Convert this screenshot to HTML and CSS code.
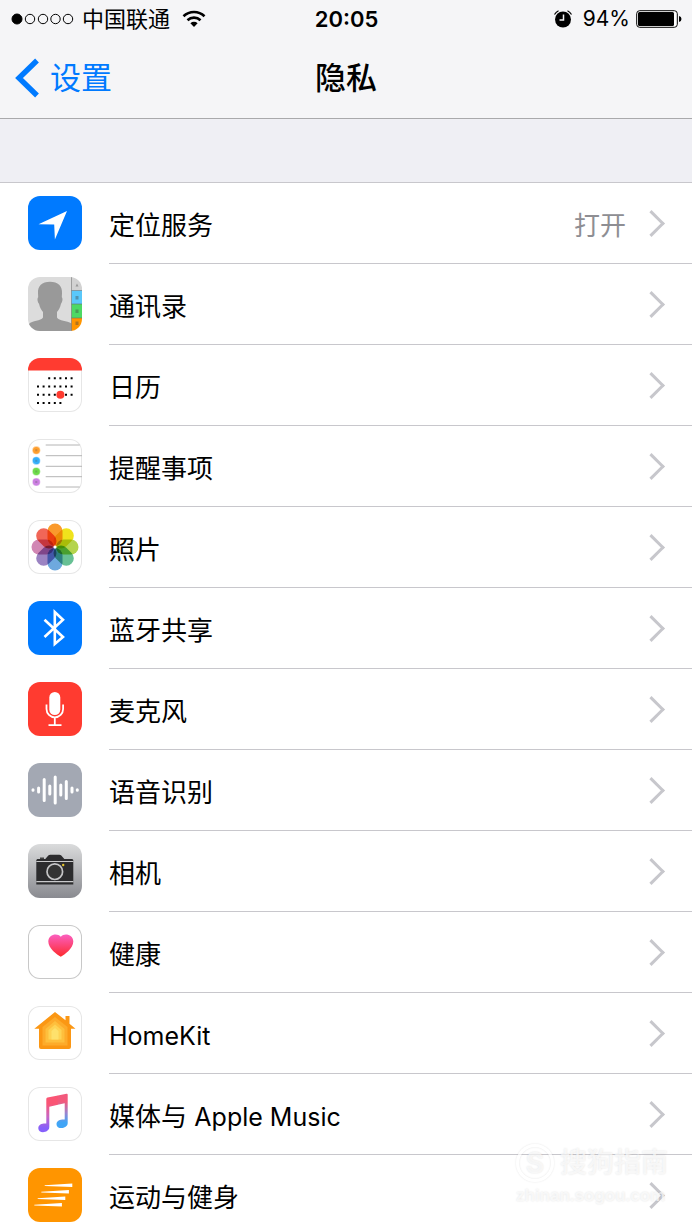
FILE: index.html
```html
<!DOCTYPE html>
<html lang="zh-CN">
  <head>
    <meta charset="UTF-8" />
    <meta name="viewport" content="width=device-width, initial-scale=1.0" />
    <title>隐私</title>
    <link rel="stylesheet" href="styles.css">
  </head>
  <body>
    <div class="screen">
      <header class="header">
        <div class="status-bar">
          <div class="status-left">
            <svg class="signal" width="63" height="12" viewBox="0 0 63 12" fill="none" stroke="#000">
              <circle cx="6" cy="6" r="5" fill="#000"></circle>
              <circle cx="19" cy="6" r="4.7"></circle>
              <circle cx="32" cy="6" r="4.7"></circle>
              <circle cx="44.500" cy="6" r="4.7"></circle>
              <circle cx="57" cy="6" r="4.7"></circle>
            </svg>
            <span class="carrier">中国联通</span>
            <svg width="24" height="18" viewBox="0 0 24 18" fill="none" stroke="#000" stroke-width="2.600">
              <path d="M1.500 6.300a15 15 0 0 1 21 0"></path>
              <path d="M5.500 10.300a9.300 9.300 0 0 1 13 0"></path>
              <path d="M12 17l-3.600-3.700a5.200 5.200 0 0 1 7.200 0z" fill="#000" stroke="none"></path>
            </svg>
          </div>
          <div class="status-time">20:05</div>
          <div class="status-right">
            <svg width="20" height="20" viewBox="0 0 20 20" fill="none">
              <circle cx="10" cy="10.500" r="8" fill="#000"></circle>
              <path d="M1.500 5.500a9 9 0 0 1 4-3.700M18.500 5.500a9 9 0 0 0-4-3.700" stroke="#000" stroke-width="1.200"></path>
              <path d="M10.500 5.500v5.500h-4" stroke="#f5f5f7" stroke-width="1.500"></path>
            </svg>
            <span class="percent">94%</span>
            <svg width="46" height="18" viewBox="0 0 46 18">
              <rect x=".7" y=".7" width="40.600" height="16.600" rx="3" fill="#fff" stroke="#000" stroke-width="1"></rect>
              <rect x="2" y="2" width="36" height="14" rx="1.500"></rect>
              <path d="M43 6q2.500 .5 2.500 3t-2.500 3z"></path>
            </svg>
          </div>
        </div>
        <nav class="nav-bar">
          <a class="back" href="#">
            <svg width="26" height="40" viewBox="0 0 26 40" fill="none" stroke="currentColor" stroke-width="5.400">
              <path d="M23 2.500L5 20l18 17.500"></path>
            </svg>
            设置
          </a>
          <h1 class="title">隐私</h1>
        </nav>
      </header>

      <ul class="list">
        <li>
          <a class="row" href="#">
            <svg class="icon blue" viewBox="0 0 54 54">
              <path d="M39 15L10.500 28.200l15.700.4.700 15z" fill="#fff"></path>
            </svg>
            <span class="cell"><span class="label">定位服务</span><span class="value">打开</span></span>
          </a>
        </li>
        <li>
          <a class="row" href="#">
            <svg class="icon" viewBox="0 0 54 54">
              <path fill="#dcdcdc" d="M0 0h43.500v54H0z"></path>
              <path fill="#999" d="M22 4.700c-8 0-12.500 4.300-12 11.500l.2 4c-1.200 1-.8 4.500.8 6.600 1 4 2 6 4 8.200v5.500C13 44 4 43.500 1 47v7h42.500v-7.500C39 43.500 31 44 29 40.500V35c2-2.200 3-4.200 4-8.200 1.600-2.100 2-5.600.8-6.600l.2-4c.5-7.200-4-11.500-12-11.500z"></path>
              <path fill="#d2d2d2" d="M43.500 0H54v13.500H43.500z"></path>
              <path fill="#5ac8fa" d="M43.500 13.500H54V27H43.500z"></path>
              <path fill="#4cd964" d="M43.500 27H54v14H43.500z"></path>
              <path fill="#ff9500" d="M43.500 41H54v13H43.500z"></path>
              <path d="M43.500 0v54M43.500 13.500H54M43.500 27H54M43.500 41H54" stroke="#666" stroke-opacity=".55"></path>
              <path d="M47.500 9.500l1.500-3 1.500 3zM47.500 19h3v3.500h-3zM47.500 32.500h3V36h-3zM47.500 44.500h3V48h-3z" fill="#444" fill-opacity=".4"></path>
            </svg>
            <span class="cell"><span class="label">通讯录</span></span>
          </a>
        </li>
        <li>
          <a class="row" href="#">
            <svg class="icon outlined" viewBox="0 0 54 54">
              <path fill="#ff3b30" d="M0 0h54v12.500H0z"></path>
              <path d="M20.200 20.300h25M9 28.500h36M9 36.800h36M9 45h25" stroke="#000" stroke-width="2" stroke-dasharray="2 3.600"></path>
              <circle cx="32.400" cy="36.800" r="4" fill="#ff3b30"></circle>
            </svg>
            <span class="cell"><span class="label">日历</span></span>
          </a>
        </li>
        <li>
          <a class="row" href="#">
            <svg class="icon outlined" viewBox="0 0 54 54">
              <path d="M17.700 6h34M17.700 16.700H54M17.700 27.300H54M17.700 37.700H54M17.700 48h34" stroke="#b4b4b4"></path>
              <g stroke-width="1.200" stroke="#fff" stroke-opacity=".45">
                <circle cx="8.300" cy="11.300" r="4" fill="#ff9f2e"></circle>
                <circle cx="8.300" cy="21.700" r="4" fill="#35aefa"></circle>
                <circle cx="8.300" cy="32.500" r="4" fill="#6edc4b"></circle>
                <circle cx="8.300" cy="43" r="4" fill="#cc80e2"></circle>
              </g>
              <path d="M7.300 11.300h2M7.300 21.700h2M7.300 32.500h2M7.300 43h2" stroke="#555" stroke-opacity=".3" stroke-width="2"></path>
            </svg>
            <span class="cell"><span class="label">提醒事项</span></span>
          </a>
        </li>
        <li>
          <a class="row" href="#">
            <svg class="icon outlined petals" viewBox="0 0 54 54">
              <rect x="19.500" y="3.500" width="15" height="22.500" rx="7.500" fill="#fa9a2c"></rect>
              <rect x="19.500" y="3.500" width="15" height="22.500" rx="7.500" fill="#f0e31c" transform="rotate(45 27 27)"></rect>
              <rect x="19.500" y="3.500" width="15" height="22.500" rx="7.500" fill="#b4d44e" transform="rotate(90 27 27)"></rect>
              <rect x="19.500" y="3.500" width="15" height="22.500" rx="7.500" fill="#67c094" transform="rotate(135 27 27)"></rect>
              <rect x="19.500" y="3.500" width="15" height="22.500" rx="7.500" fill="#6ea9de" transform="rotate(180 27 27)"></rect>
              <rect x="19.500" y="3.500" width="15" height="22.500" rx="7.500" fill="#9b83c2" transform="rotate(225 27 27)"></rect>
              <rect x="19.500" y="3.500" width="15" height="22.500" rx="7.500" fill="#d187b4" transform="rotate(270 27 27)"></rect>
              <rect x="19.500" y="3.500" width="15" height="22.500" rx="7.500" fill="#f16657" transform="rotate(315 27 27)"></rect>
              <circle class="center" cx="27" cy="27" r="1.500" fill="#fff"></circle>
            </svg>
            <span class="cell"><span class="label">照片</span></span>
          </a>
        </li>
        <li>
          <a class="row" href="#">
            <svg class="icon blue" viewBox="0 0 54 54">
              <path d="M16.500 18.700L35 36l-8.200 7v-32L35 18.700 16.500 36" fill="none" stroke="#fff" stroke-width="2.600"></path>
            </svg>
            <span class="cell"><span class="label">蓝牙共享</span></span>
          </a>
        </li>
        <li>
          <a class="row" href="#">
            <svg class="icon red" viewBox="0 0 54 54">
              <rect x="21.300" y="10" width="11" height="23" rx="5.500" fill="#fff"></rect>
              <path d="M18.500 22.500V27a8.300 8.300 0 0 0 16.600 0v-4.500M26.800 35.500V43M20.500 43.200h13" fill="none" stroke="#fff" stroke-width="1.800"></path>
            </svg>
            <span class="cell"><span class="label">麦克风</span></span>
          </a>
        </li>
        <li>
          <a class="row" href="#">
            <svg class="icon gray" viewBox="0 0 54 54">
              <path d="M5 26.700v.6M10.600 25v4M16.200 16.500v21M21.800 23v8M27.200 14v26M32.800 22v10M38.300 18.500v17M44 25v4M49.300 26.700v.6" stroke="#fff" stroke-width="3" stroke-linecap="round"></path>
            </svg>
            <span class="cell"><span class="label">语音识别</span></span>
          </a>
        </li>
        <li>
          <a class="row" href="#">
            <svg class="icon silver" viewBox="0 0 54 54">
              <path d="M8.300 40.500V16l1-1h8l3-3.500q.7-.8 2-.8h9q1.300 0 2 .8l3 3.500h8l1 1v24.500z" fill="#2c2c2e"></path>
              <path d="M12 13.600h4v1.400h-4z" fill="#444"></path>
              <path d="M8.300 17.500h37M8.300 37.600h37" stroke="#c9c9cb" stroke-width="1.100"></path>
              <circle cx="26.800" cy="27.700" r="7.800" fill="#333" stroke="#c4c4c6" stroke-width="1.700"></circle>
              <circle cx="35.200" cy="21" r="1.200" fill="#e5c42c"></circle>
            </svg>
            <span class="cell"><span class="label">相机</span></span>
          </a>
        </li>
        <li>
          <a class="row" href="#">
            <svg class="icon outlined strong" viewBox="0 0 54 54">
              <defs>
                <linearGradient id="heart" x1="0" y1="0" x2="0" y2="1">
                  <stop offset="0" stop-color="#fb5fc0"></stop>
                  <stop offset="1" stop-color="#fd2a2e"></stop>
                </linearGradient>
              </defs>
              <path d="M32.800 31.700C29 29.700 20.300 23.500 20.300 16.500c0-7 9-9.200 12.500-4.700 3.500-4.500 12.500-2.300 12.500 4.700 0 7-8.700 13.200-12.500 15.200z" fill="url(#heart)"></path>
            </svg>
            <span class="cell"><span class="label">健康</span></span>
          </a>
        </li>
        <li>
          <a class="row" href="#">
            <svg class="icon outlined" viewBox="0 0 54 54">
              <path d="M27 6L6.300 22.700H11V41q0 2 2 2h28q2 0 2-2V22.700h4.500l-6-5V10h-4v4.200z" fill="#fb9714"></path>
              <path d="M27 11L14.500 21v18.500h25V21z" fill="#fdab2b"></path>
              <path d="M27 15l-9.500 8v13.500h19V23z" fill="#febf3d"></path>
              <path d="M27 18.500L20.500 24v9.500h13V24z" fill="#fed354"></path>
              <path d="M27 22l-3.500 3v8.500h7V25z" fill="#fee16c"></path>
            </svg>
            <span class="cell"><span class="label"><span class="latin">HomeKit</span></span></span>
          </a>
        </li>
        <li>
          <a class="row" href="#">
            <svg class="icon outlined" viewBox="0 0 54 54">
              <defs>
                <linearGradient id="note-left" gradientUnits="userSpaceOnUse" x1="0" y1="7" x2="0" y2="45">
                  <stop offset=".25" stop-color="#fa5574"></stop>
                  <stop offset=".6" stop-color="#c766c4"></stop>
                  <stop offset=".9" stop-color="#8660fb"></stop>
                </linearGradient>
                <linearGradient id="note-right" gradientUnits="userSpaceOnUse" x1="0" y1="7" x2="0" y2="45">
                  <stop offset=".2" stop-color="#f2597c"></stop>
                  <stop offset=".5" stop-color="#9b84cf"></stop>
                  <stop offset=".75" stop-color="#41a5f6"></stop>
                </linearGradient>
              </defs>
              <path d="M18.300 12q0-1.200 1.200-1.500L30 8.500v9.300l-8.700 2V40c0 6-11 7.200-11 1.200 0-4.200 4.500-5 8-4.700z" fill="url(#note-left)"></path>
              <path d="M29.800 8.500l8.700-1.700q1.200-.2 1.200 1V36c0 6-11.200 7-11.200 1.200 0-4.200 4.700-5 8.200-4.700V16.300l-6.900 1.500z" fill="url(#note-right)"></path>
            </svg>
            <span class="cell"><span class="label">媒体与 <span class="latin">Apple Music</span></span></span>
          </a>
        </li>
        <li>
          <a class="row" href="#">
            <svg class="icon orange" viewBox="0 0 54 54">
              <path d="M16.700 17.200l27.600-1.700V19l-27.600-.9zM13.300 23.700l27.600-1.700v3.500l-27.600-.9zM9.700 30.200l27.600-1.700V32l-27.600-.9zM6.300 36.700L33.900 35v3.500l-27.600-.9z" fill="#fff"></path>
            </svg>
            <span class="cell"><span class="label">运动与健身</span></span>
          </a>
        </li>
      </ul>

      <div class="watermark">
        <div class="brand"><span class="logo">S</span>搜狗指南</div>
        <div class="site">zhinan.sogou.com</div>
      </div>
    </div>
  </body>
</html>
```

FILE: styles.css
```css
:root {
  --blue: #007aff;
  --bar-color: #f5f5f7;
  --group-color: #efeff4;
  --line-color: #c8c7cc;
  --muted-color: #8e8e93;
}

* {
  margin: 0;
  padding: 0;
  box-sizing: border-box;
}

body {
  font-family: Inter, "Noto Sans CJK SC", sans-serif;
  background-color: var(--group-color);
  color: #000;
}

a {
  color: inherit;
  text-decoration: none;
}

.screen {
  position: relative;
  height: 100vh;
  overflow: hidden;
}

.header {
  background-color: var(--bar-color);
  border-bottom: 1px solid #a9a9ab;
}

/* Status bar */
.status-bar {
  display: grid;
  grid-template-columns: 1fr auto 1fr;
  align-items: center;
  height: 38px;
  padding: 0 10px 0 11px;
  font-size: 22px;
  line-height: 30px;
}

.status-left,
.status-right {
  display: flex;
  align-items: center;
}

.carrier {
  margin: 0 12px 0 8px;
}

.status-time {
  font-weight: 600;
}

.status-right {
  justify-content: flex-end;
}

.percent {
  margin: 0 6px 0 10px;
  font-size: 21px;
}

/* Navigation bar */
.nav-bar {
  display: grid;
  grid-template-columns: 1fr auto 1fr;
  align-items: center;
  height: 80px;
  padding: 0 14px;
}

.back {
  display: flex;
  align-items: center;
  gap: 10px;
  font-size: 31px;
  line-height: 40px;
  color: var(--blue);
}

.title {
  font-size: 31px;
  font-weight: 500;
  line-height: 40px;
}

/* Settings list */
.list {
  margin-top: 63px;
  list-style: none;
  background-color: white;
  border-top: 1px solid var(--line-color);
}

.row {
  display: flex;
  align-items: center;
  gap: 27px;
  padding-left: 28px;
}

.icon {
  flex: none;
  width: 54px;
  height: 54px;
  margin-bottom: 2px;
  border-radius: 12px;
}

.icon.blue {
  background-color: var(--blue);
}

.icon.red {
  background-color: #ff3b30;
}

.icon.gray {
  background-color: #a3a8b3;
}

.icon.orange {
  background-color: #ff9500;
}

.icon.silver {
  background-image: linear-gradient(#dadbdc, #898a90);
}

.icon.outlined {
  background-color: white;
  box-shadow: inset 0 0 0 1px #e6e6e6;
}

.icon.strong {
  box-shadow: inset 0 0 0 1px #c8c8c8;
}

.petals {
  isolation: isolate;
}

.petals rect {
  mix-blend-mode: multiply;
}

.cell {
  flex: 1;
  display: flex;
  align-items: center;
  height: 81px;
  padding-right: 31px;
  border-bottom: 1px solid var(--line-color);
  font-size: 26px;
  line-height: 40px;
}

.cell::after {
  content: "";
  width: 16px;
  height: 16px;
  border: solid #c7c7cc;
  border-width: 3px 3px 0 0;
  transform: rotate(45deg);
}

.label,
.value {
  padding-top: 5px;
}

.label {
  flex: 1;
}

.latin {
  font-size: 25px;
}

.value {
  margin-right: 16px;
  color: var(--muted-color);
}

/* Watermark */
.watermark {
  position: absolute;
  right: 24px;
  bottom: 21px;
  color: rgba(255, 255, 255, 0.7);
  text-shadow: 0 0 2px rgba(0, 0, 0, 0.12);
  pointer-events: none;
}

.brand {
  display: flex;
  align-items: center;
  gap: 6px;
  font-size: 27px;
  font-weight: 500;
  line-height: 40px;
}

.logo {
  width: 38px;
  height: 38px;
  border: 3px solid rgba(255, 255, 255, 0.7);
  border-radius: 50%;
  box-shadow: 0 0 2px rgba(0, 0, 0, 0.12), inset 0 0 2px rgba(0, 0, 0, 0.12);
  font-size: 28px;
  font-weight: 700;
  line-height: 32px;
  text-align: center;
}

.site {
  font-family: "Liberation Sans", Arial, sans-serif;
  font-size: 17px;
  font-weight: 700;
  line-height: 26px;
}
```
